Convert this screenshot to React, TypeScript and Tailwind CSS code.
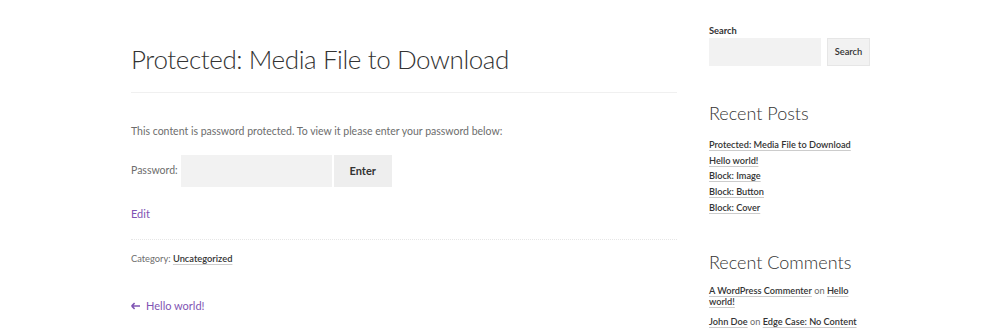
import React from "react";

const font = { fontFamily: "Lato, 'Noto Sans', sans-serif" };
const link = "font-semibold text-[#333] underline decoration-[#ccc] underline-offset-2";

export default function App() {
  return (
    <div className="w-[1000px] h-[331px] overflow-hidden bg-white" style={font}>
      <div className="flex pl-[131px] gap-[32px]">
        <main className="w-[546px] shrink-0">
          <h1 className="pt-[41px] text-[26px] leading-[36px] font-light text-[#333] tracking-[-0.4px]">
            Protected: Media File to Download
          </h1>
          <div className="mt-[15px] border-b border-[#f0f0f0]" />
          <p className="mt-[30px] text-[10.5px] leading-[16px] text-[#6d6d6d]">
            This content is password protected. To view it please enter your password below:
          </p>
          <div className="mt-[16px] flex items-center h-[32px]">
            <span className="text-[10.5px] text-[#6d6d6d] mr-[3px]">Password:</span>
            <div className="w-[151px] h-[32px] bg-[#f2f2f2]" />
            <div className="ml-[2px] w-[58px] h-[32px] bg-[#eeeeee] flex items-center justify-center text-[11px] font-bold text-[#333]">
              Enter
            </div>
          </div>
          <div className="mt-[19px] text-[11px] leading-[16px] text-[#7f54b3]">Edit</div>
          <div className="mt-[17px] border-b border-dotted border-[#e6e6e6]" />
          <div className="mt-[12px] text-[9.3px] leading-[14px] text-[#6d6d6d]">
            Category: <span className={link}>Uncategorized</span>
          </div>
          <div className="mt-[32px] flex items-center gap-[6px] text-[11px] leading-[16px] text-[#7f54b3]">
            <svg width="9" height="8" viewBox="0 0 9 8">
              <path d="M0.6 4 L3.6 1.2 M0.6 4 L3.6 6.8 M0.6 4 H9" stroke="#7f54b3" strokeWidth="1.6" fill="none" />
            </svg>
            <span>Hello world!</span>
          </div>
        </main>
        <aside className="w-[161px] shrink-0 pt-[25px]">
          <div className="text-[9.3px] font-bold text-[#333] leading-[12px]">Search</div>
          <div className="mt-[1px] flex gap-[6px]">
            <div className="w-[112px] h-[28px] bg-[#f2f2f2]" />
            <div className="w-[43px] h-[28px] bg-[#f2f2f2] border border-[#e6e6e6] flex items-center justify-center text-[9.3px] font-semibold text-[#333]">
              Search
            </div>
          </div>
          <h2 className="mt-[35px] text-[18px] leading-[24px] font-light text-[#333]">Recent Posts</h2>
          <ul className="mt-[13px] flex flex-col gap-[2px] text-[9.2px] leading-[13.7px] font-semibold text-[#333]">
            {["Protected: Media File to Download", "Hello world!", "Block: Image", "Block: Button", "Block: Cover"].map((t) => (
              <li key={t}>
                <span className="underline decoration-[#ccc] underline-offset-2">{t}</span>
              </li>
            ))}
          </ul>
          <h2 className="mt-[35px] text-[18px] leading-[24px] font-light text-[#333]">Recent Comments</h2>
          <div className="mt-[11px] text-[9.2px] leading-[11px] text-[#6d6d6d]">
            <p className="w-[142px]">
              <a className={link}>A WordPress Commenter</a> on <a className={link}>Hello</a>{" "}
              <a className={link}>world!</a>
            </p>
            <p className="mt-[9px]">
              <a className={link}>John Doe</a> on <a className={link}>Edge Case: No Content</a>
            </p>
          </div>
        </aside>
      </div>
    </div>
  );
}
